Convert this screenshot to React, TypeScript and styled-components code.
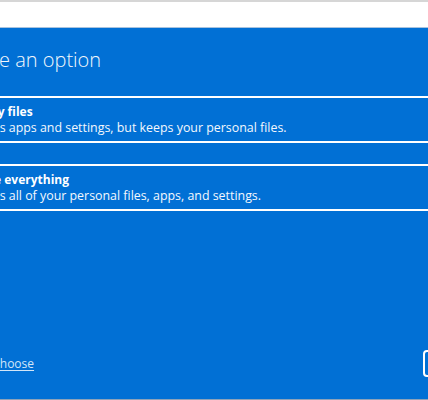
import React from "react";
import styled, { createGlobalStyle } from "styled-components";

const GlobalStyle = createGlobalStyle`
  html, body {
    margin: 0;
    padding: 0;
    width: 428px;
    height: 400px;
    overflow: hidden;
    background: #ffffff;
  }
  body {
    font-family: "Open Sans", "Noto Sans", sans-serif;
  }
`;

const Screen = styled.div`
  width: 428px;
  height: 400px;
  display: flex;
  flex-direction: column;
  overflow: hidden;
`;

const TopBar = styled.div`
  height: 25px;
  flex: none;
  background: #ffffff;
  border-top: 2px solid #d6d6d6;
  border-bottom: 1px solid #a9c3de;
`;

const Dialog = styled.div`
  flex: 1;
  background: #0170d5;
  border-bottom: 1px solid #8da3ba;
  overflow: hidden;
  display: flex;
`;

const Content = styled.div`
  flex: none;
  width: 561px;
  margin-left: -58px;
  display: flex;
  flex-direction: column;
  padding-top: 18px;
  box-sizing: border-box;
`;

const Title = styled.h1`
  margin: 0;
  font-size: 20px;
  line-height: 28px;
  font-weight: 300;
  color: #f2f7fc;
  white-space: nowrap;
`;

const Options = styled.div`
  margin-top: 22px;
  display: flex;
  flex-direction: column;
  gap: 21px;
`;

const OptionCard = styled.button`
  display: flex;
  flex-direction: column;
  align-items: flex-start;
  margin: 0;
  padding: 6px 9px 5px;
  background: transparent;
  border: 2px solid #ffffff;
  border-radius: 0;
  color: #ffffff;
  font-family: inherit;
  text-align: left;
  cursor: pointer;
`;

const OptionTitle = styled.span`
  font-size: 12px;
  line-height: 16px;
  font-weight: 700;
  white-space: nowrap;
`;

const OptionText = styled.span`
  font-size: 12.4px;
  line-height: 16px;
  font-weight: 400;
  color: #f4f8fd;
  white-space: nowrap;
`;

const Footer = styled.div`
  margin-top: auto;
  margin-bottom: 22px;
  padding-left: 2px;
  display: flex;
  align-items: center;
  justify-content: space-between;
`;

const HelpLink = styled.a`
  font-size: 12px;
  line-height: 16px;
  color: #d3e6f8;
  text-decoration: underline;
  text-underline-offset: 2px;
  white-space: nowrap;
  cursor: pointer;
`;

const CancelButton = styled.button`
  width: 80px;
  height: 27px;
  margin: 0;
  padding: 0;
  background: transparent;
  border: 2px solid #ffffff;
  border-radius: 4px;
  color: #ffffff;
  font-family: inherit;
  font-size: 12px;
`;

export default function App() {
  return (
    <>
      <GlobalStyle />
      <Screen>
        <TopBar />
        <Dialog>
          <Content>
            <Title>Choose an option</Title>
            <Options>
              <OptionCard>
                <OptionTitle>Keep my files</OptionTitle>
                <OptionText>Removes apps and settings, but keeps your personal files.</OptionText>
              </OptionCard>
              <OptionCard>
                <OptionTitle>Remove everything</OptionTitle>
                <OptionText>Removes all of your personal files, apps, and settings.</OptionText>
              </OptionCard>
            </Options>
            <Footer>
              <HelpLink>Help me choose</HelpLink>
              <CancelButton aria-label="Cancel" />
            </Footer>
          </Content>
        </Dialog>
      </Screen>
    </>
  );
}
